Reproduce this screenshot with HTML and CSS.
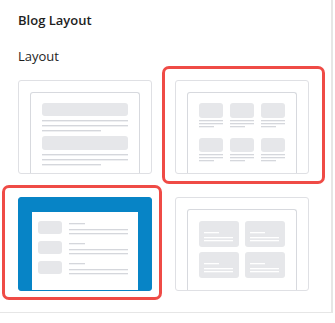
FILE: index.html
```html
<!DOCTYPE html>
<html>
<head>
<meta charset="utf-8">
<link rel="stylesheet" href="styles.css">
</head>
<body>
<div class="panel">
  <h2 class="title">Blog Layout</h2>
  <div class="label">Layout</div>
  <div class="grid">
    <div class="card">
      <div class="frame">
        <svg width="108" height="81" viewBox="0 0 108 81">
          <rect x="11" y="10" width="86" height="13" rx="3" class="tile"/>
          <rect x="11" y="27" width="86" height="1.4" class="ln"/>
          <rect x="11" y="32" width="86" height="1.4" class="ln"/>
          <rect x="11" y="37" width="59" height="1.4" class="ln"/>
          <rect x="11" y="43" width="86" height="14" rx="3" class="tile"/>
          <rect x="11" y="61" width="86" height="1.4" class="ln"/>
          <rect x="11" y="66" width="86" height="1.4" class="ln"/>
          <rect x="11" y="71" width="59" height="1.4" class="ln"/>
        </svg>
      </div>
    </div>
    <div class="card">
      <div class="frame">
        <svg width="108" height="81" viewBox="0 0 108 81">
          <g>
            <rect x="11" y="10" width="24" height="15" rx="3" class="tile"/>
            <rect x="11" y="27" width="24" height="1.3" class="ln"/>
            <rect x="11" y="30" width="24" height="1.3" class="ln"/>
            <rect x="11" y="33" width="15" height="1.3" class="ln"/>
          </g>
          <g transform="translate(31 0)">
            <rect x="11" y="10" width="24" height="15" rx="3" class="tile"/>
            <rect x="11" y="27" width="24" height="1.3" class="ln"/>
            <rect x="11" y="30" width="24" height="1.3" class="ln"/>
            <rect x="11" y="33" width="15" height="1.3" class="ln"/>
          </g>
          <g transform="translate(62 0)">
            <rect x="11" y="10" width="24" height="15" rx="3" class="tile"/>
            <rect x="11" y="27" width="24" height="1.3" class="ln"/>
            <rect x="11" y="30" width="24" height="1.3" class="ln"/>
            <rect x="11" y="33" width="15" height="1.3" class="ln"/>
          </g>
          <g transform="translate(0 35)">
            <rect x="11" y="10" width="24" height="14" rx="3" class="tile"/>
            <rect x="11" y="26" width="24" height="1.3" class="ln"/>
            <rect x="11" y="29" width="24" height="1.3" class="ln"/>
            <rect x="11" y="32" width="15" height="1.3" class="ln"/>
          </g>
          <g transform="translate(31 35)">
            <rect x="11" y="10" width="24" height="14" rx="3" class="tile"/>
            <rect x="11" y="26" width="24" height="1.3" class="ln"/>
            <rect x="11" y="29" width="24" height="1.3" class="ln"/>
            <rect x="11" y="32" width="15" height="1.3" class="ln"/>
          </g>
          <g transform="translate(62 35)">
            <rect x="11" y="10" width="24" height="14" rx="3" class="tile"/>
            <rect x="11" y="26" width="24" height="1.3" class="ln"/>
            <rect x="11" y="29" width="24" height="1.3" class="ln"/>
            <rect x="11" y="32" width="15" height="1.3" class="ln"/>
          </g>
        </svg>
      </div>
    </div>
    <div class="card selected">
      <div class="frame">
        <svg width="106" height="79" viewBox="0 0 106 79">
          <g>
            <rect x="6" y="9" width="24" height="13" rx="3" class="tile"/>
            <rect x="37" y="11" width="16" height="1.3" class="ln"/>
            <rect x="37" y="17" width="59" height="1.3" class="ln"/>
            <rect x="37" y="21" width="59" height="1.3" class="ln"/>
          </g>
          <g transform="translate(0 20)">
            <rect x="6" y="9" width="24" height="13" rx="3" class="tile"/>
            <rect x="37" y="11" width="16" height="1.3" class="ln"/>
            <rect x="37" y="17" width="59" height="1.3" class="ln"/>
            <rect x="37" y="21" width="59" height="1.3" class="ln"/>
          </g>
          <g transform="translate(0 40)">
            <rect x="6" y="9" width="24" height="13" rx="3" class="tile"/>
            <rect x="37" y="11" width="16" height="1.3" class="ln"/>
            <rect x="37" y="17" width="59" height="1.3" class="ln"/>
            <rect x="37" y="21" width="59" height="1.3" class="ln"/>
          </g>
        </svg>
      </div>
    </div>
    <div class="card">
      <div class="frame">
        <svg width="108" height="81" viewBox="0 0 108 81">
          <g>
            <rect x="11" y="11" width="40" height="26" rx="3" class="tile"/>
            <rect x="16" y="22" width="15" height="1.3" class="wl"/>
            <rect x="16" y="27" width="29" height="1.3" class="wl"/>
            <rect x="16" y="30" width="29" height="1.3" class="wl"/>
          </g>
          <g transform="translate(46 0)">
            <rect x="11" y="11" width="40" height="26" rx="3" class="tile"/>
            <rect x="16" y="22" width="15" height="1.3" class="wl"/>
            <rect x="16" y="27" width="29" height="1.3" class="wl"/>
            <rect x="16" y="30" width="29" height="1.3" class="wl"/>
          </g>
          <g transform="translate(0 31)">
            <rect x="11" y="11" width="40" height="26" rx="3" class="tile"/>
            <rect x="16" y="22" width="15" height="1.3" class="wl"/>
            <rect x="16" y="27" width="29" height="1.3" class="wl"/>
            <rect x="16" y="30" width="29" height="1.3" class="wl"/>
          </g>
          <g transform="translate(46 31)">
            <rect x="11" y="11" width="40" height="26" rx="3" class="tile"/>
            <rect x="16" y="22" width="15" height="1.3" class="wl"/>
            <rect x="16" y="27" width="29" height="1.3" class="wl"/>
            <rect x="16" y="30" width="29" height="1.3" class="wl"/>
          </g>
        </svg>
      </div>
    </div>
  </div>
  <div class="mark mark-a"></div>
  <div class="mark mark-b"></div>
</div>
</body>
</html>
```

FILE: styles.css
```css
html, body {
  margin: 0;
  padding: 0;
  background: #ffffff;
}

body {
  font-family: "Open Sans", "Noto Sans", "Liberation Sans", sans-serif;
  color: #1e1e1e;
  width: 335px;
  height: 323px;
  overflow: hidden;
}

.panel {
  position: relative;
  width: 333px;
  height: 313px;
  border-right: 2px solid #e6e6e6;
  border-bottom: 1px solid #e6e6e6;
  padding: 11px 0 0 18px;
  box-sizing: border-box;
}

.title {
  margin: 0;
  font-size: 13px;
  font-weight: 600;
  line-height: 18px;
}

.label {
  margin-top: 18px;
  font-size: 13px;
  line-height: 18px;
}

.grid {
  margin-top: 15px;
  display: grid;
  grid-template-columns: 134px 134px;
  grid-auto-rows: 94px;
  column-gap: 23px;
  row-gap: 23px;
}

.card {
  box-sizing: border-box;
  border: 1px solid #dfe0e4;
  border-radius: 3px;
  background: #ffffff;
  padding-top: 11px;
  display: flex;
  flex-direction: column;
  align-items: center;
  overflow: hidden;
}

.frame {
  flex: 1;
  width: 110px;
  box-sizing: border-box;
  border: 1px solid #d7d9de;
  border-bottom: 0;
  border-radius: 3px 3px 0 0;
  background: #ffffff;
  overflow: hidden;
}

.frame svg {
  display: block;
}

.card.selected {
  background: #0784c6;
  border-color: #0784c6;
  padding-top: 14px;
}

.card.selected .frame {
  width: 106px;
  border: 0;
  border-radius: 0;
}

.tile { fill: #e6e7ea; }
.ln { fill: #d5d7dc; }
.wl { fill: #ffffff; }

.mark {
  position: absolute;
  border: 3px solid #ef4b46;
  border-radius: 7px;
  box-sizing: border-box;
  pointer-events: none;
}

.mark-a {
  left: 162px;
  top: 66px;
  width: 163px;
  height: 118px;
}

.mark-b {
  left: 2px;
  top: 185px;
  width: 160px;
  height: 115px;
}
```
